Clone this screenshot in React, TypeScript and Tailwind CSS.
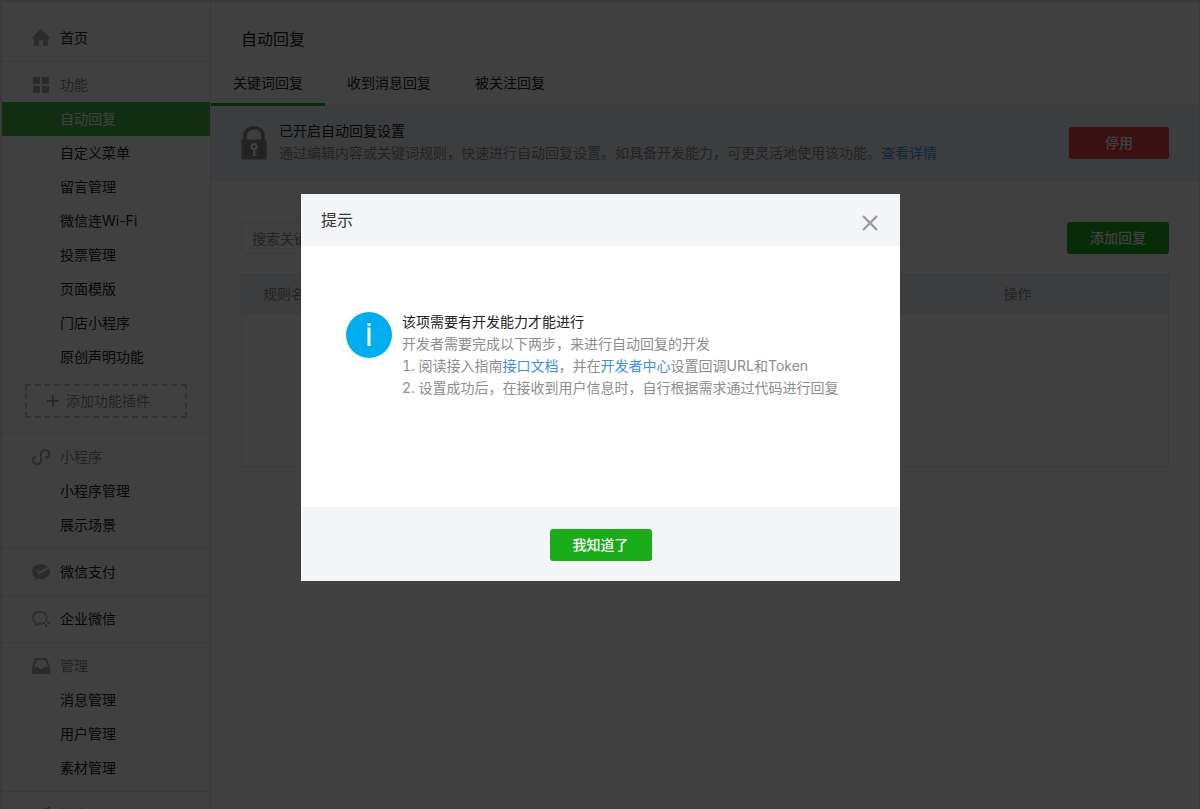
import { useState } from "react";
import type { ReactNode } from "react";
import clsx from "clsx";

type NavGroup = {
    title: string;
    icon: ReactNode;
    muted?: boolean;
    items?: string[];
    addPlugin?: boolean;
};

const HomeIcon = () => (
    <svg viewBox="0 0 18 18" className="size-[18px]" fill="currentColor" aria-hidden="true">
        <path d="M9 0 0 8.800V9.500h1.800V17h5v-5c0-.3.200-.5.500-.5h3.400c.3 0 .5.200.5.500v5h5V9.500H18V8.800z" />
    </svg>
);

const GridIcon = () => (
    <svg viewBox="0 0 18 18" className="size-[18px]" fill="currentColor" aria-hidden="true">
        <path d="M1 1h7v7H1zM10 1h7v7h-7zM1 10h7v7H1zM10 10h7v7h-7z" />
    </svg>
);

const MiniProgramIcon = () => (
    <svg viewBox="0 0 18 18" className="size-[18px]" fill="none" stroke="currentColor" strokeWidth="2" strokeLinecap="round" aria-hidden="true">
        <path d="M14 9.6c1.700-.3 3-1.700 3-3.700C17 3.500 15.300 2 13 2S9 3.600 9 5.800v6.400C9 14.400 7.300 16 5 16s-4-1.500-4-3.900c0-2 1.300-3.400 3-3.700" />
    </svg>
);

const PayIcon = () => (
    <svg viewBox="0 0 18 18" className="size-[18px]" fill="currentColor" aria-hidden="true">
        <path d="M17.200 5.400 7.500 11.300c-.3.200-.6.100-.8-.2L4.400 7c-.2-.4.1-.6.4-.4l2.300 1.600c.3.200.6.200.9.100l7.700-4.500C14.100 2.100 11.700 1 9 1 4 1 0 4.400 0 8.600c0 2.400 1.300 4.500 3.300 5.900l-.4 2.100c-.1.400.2.600.5.400l2.400-1.200c1 .3 2 .4 3.200.4 5 0 9-3.400 9-7.600 0-1.100-.3-2.200-.8-3.200z" />
    </svg>
);

const WorkIcon = () => (
    <svg viewBox="0 0 18 18" className="size-[18px]" fill="none" stroke="currentColor" strokeWidth="1.500" aria-hidden="true">
        <path d="M10.500 13.800c-1.100.3-2.600.4-4 .1L3.300 15.300l.2-2.600C1.800 11.500.8 9.700.8 7.800.8 4.300 3.900 1.700 7.800 1.700s7 2.600 7 6.100c0 .6-.1 1.100-.3 1.600" />
        <path d="M14.200 9.600v2.400M14.200 14.600v2.400M10.700 13.300h2.300M15.500 13.300h2.400" strokeWidth="2" />
    </svg>
);

const InboxIcon = () => (
    <svg viewBox="0 0 18 18" className="size-[18px]" fill="currentColor" aria-hidden="true">
        <path fillRule="evenodd" d="M3.500 1h11L18 9.500V17H0V9.500zM5 2.800 2.200 9.700H6c.2 1.300 1.400 2.300 3 2.300s2.800-1 3-2.300h3.800L13 2.800z" />
    </svg>
);

const SendIcon = () => (
    <svg viewBox="0 0 18 18" className="size-[18px]" fill="currentColor" aria-hidden="true">
        <path d="M18 0v17l-7-3-3 4v-5L15 4 5 12l-5-2z" />
    </svg>
);

const LockIcon = () => (
    <svg viewBox="0 0 26 34" className="h-[34px] w-[26px] shrink-0 text-[#8d8d8d]" fill="none" aria-hidden="true">
        <path d="M4 14V9.500C4 5 8 1.800 13 1.800S22 5 22 9.500V14" stroke="currentColor" strokeWidth="3.600" />
        <path d="M0.500 13.500h25v20h-25z" fill="currentColor" />
        <circle cx="13" cy="20.500" r="2.500" stroke="#fff" strokeWidth="2" />
        <path d="M13 23v7M13 26h2.500M13 29h2.500" stroke="#fff" strokeWidth="1.600" />
    </svg>
);

const groups: NavGroup[] = [
    { title: "首页", icon: <HomeIcon /> },
    {
        title: "功能",
        icon: <GridIcon />,
        muted: true,
        items: ["自动回复", "自定义菜单", "留言管理", "微信连Wi-Fi", "投票管理", "页面模版", "门店小程序", "原创声明功能"],
        addPlugin: true,
    },
    { title: "小程序", icon: <MiniProgramIcon />, muted: true, items: ["小程序管理", "展示场景"] },
    { title: "微信支付", icon: <PayIcon /> },
    { title: "企业微信", icon: <WorkIcon /> },
    { title: "管理", icon: <InboxIcon />, muted: true, items: ["消息管理", "用户管理", "素材管理"] },
    { title: "推广", icon: <SendIcon />, muted: true },
];

const tabs = ["关键词回复", "收到消息回复", "被关注回复"];

function Sidebar() {
    return (
        <nav className="w-[209px] shrink-0 border-r border-[#e7e7eb] pt-[13px]">
            {groups.map((group, i) => (
                <section key={group.title} className={clsx("pt-1.5 pb-1.5", i > 0 && "border-t border-[#e7e7eb]")}>
                    <div className="flex h-[34px] items-center pl-[30px] text-[#acacac]">
                        {group.icon}
                        {group.muted ? (
                            <h2 className="ml-2.5 text-[#8d8d8d]">{group.title}</h2>
                        ) : (
                            <a href="#" className="ml-2.5 text-[#222222]">{group.title}</a>
                        )}
                    </div>
                    {group.items && (
                        <ul>
                            {group.items.map((item) => (
                                <li key={item}>
                                    <a
                                        href="#"
                                        className={clsx(
                                            "block h-[34px] pl-[58px] leading-[34px]",
                                            item === "自动回复" ? "bg-[#44b549] text-white" : "text-[#222222]"
                                        )}
                                    >
                                        {item}
                                    </a>
                                </li>
                            ))}
                        </ul>
                    )}
                    {group.addPlugin && (
                        <button
                            type="button"
                            className="mt-2.5 mr-[22px] mb-[9px] ml-[23px] flex h-[34px] w-[162px] items-center border-2 border-dashed border-[#c4c4c4] pl-5 text-[#8d8d8d]"
                        >
                            <svg viewBox="0 0 12 12" className="mr-[7px] size-3" stroke="currentColor" strokeWidth="1.500" aria-hidden="true">
                                <path d="M6 0v12M0 6h12" />
                            </svg>
                            添加功能插件
                        </button>
                    )}
                </section>
            ))}
        </nav>
    );
}

function Content() {
    return (
        <main className="min-w-0 flex-1">
            <header className="border-b border-[#e7e7eb]">
                <h1 className="pt-[25px] pl-[30px] text-base leading-6 text-[#222222]">自动回复</h1>
                <div className="mt-[11px] -mb-px flex" role="tablist">
                    {tabs.map((tab, i) => (
                        <button
                            key={tab}
                            type="button"
                            role="tab"
                            aria-selected={i === 0}
                            className={clsx(
                                "h-11 border-b-3 px-[22px] text-[#222222]",
                                i === 0 ? "border-[#1aad19]" : "border-transparent"
                            )}
                        >
                            {tab}
                        </button>
                    ))}
                </div>
            </header>
            <section className="flex items-start border-b border-[#e7e7eb] bg-[#eef1f6] pt-[14px] pr-[30px] pb-4 pl-[30px]">
                <div className="pt-1.5">
                    <LockIcon />
                </div>
                <div className="ml-3 flex-1 leading-[22px]">
                    <h2 className="text-[#222222]">已开启自动回复设置</h2>
                    <p className="text-[#8d8d8d]">
                        通过编辑内容或关键词规则，快速进行自动回复设置。如具备开发能力，可更灵活地使用该功能。
                        <a href="#" className="text-[#459ae9]">查看详情</a>
                    </p>
                </div>
                <button type="button" className="mt-[7px] h-8 w-[100px] rounded-[3px] bg-[#e64340] font-medium text-white">
                    停用
                </button>
            </section>
            <div className="px-[30px] pt-[41px]">
                <div className="flex items-start justify-between">
                    <input
                        type="search"
                        aria-label="搜索关键词"
                        placeholder="搜索关键词/规则名称"
                        className="h-8 w-[280px] rounded-[3px] border border-[#e7e7eb] px-2.5 placeholder:text-[#8d8d8d]"
                    />
                    <button type="button" className="h-8 w-[102px] rounded-[3px] bg-[#1aad19] font-medium text-white">
                        添加回复
                    </button>
                </div>
                <table className="mt-5 w-full border border-[#e7e7eb] text-left">
                    <thead>
                        <tr className="h-[39px] border-b border-[#e7e7eb] bg-[#eef1f6] text-[#8d8d8d]">
                            <th className="pl-[21px] font-normal">规则名称</th>
                            <th className="w-[187px] pl-[22px] font-normal">操作</th>
                        </tr>
                    </thead>
                    <tbody>
                        <tr className="h-[153px]">
                            <td colSpan={2} />
                        </tr>
                    </tbody>
                </table>
            </div>
        </main>
    );
}

function TipDialog({ onClose }: { onClose: () => void }) {
    return (
        <div className="fixed inset-0 flex items-start justify-center bg-black/75 pt-[194px] pl-px">
            <div role="dialog" aria-modal="true" aria-labelledby="tip-title" className="w-[599px] max-w-full bg-white">
                <header className="flex h-[52px] items-center justify-between bg-[#f4f5f9] pr-[22px] pl-5">
                    <h2 id="tip-title" className="text-base text-[#353535]">提示</h2>
                    <button type="button" aria-label="关闭" onClick={onClose} className="mt-1.5 text-[#9b9b9b]">
                        <svg viewBox="0 0 16 16" className="size-4" stroke="currentColor" strokeWidth="2.400">
                            <path d="M1 1l14 14M15 1 1 15" />
                        </svg>
                    </button>
                </header>
                <div className="flex min-h-[261px] items-start pt-[65px] pr-10 pl-[45px]">
                    <svg viewBox="0 0 46 46" className="mt-px size-[46px] shrink-0" aria-hidden="true">
                        <circle cx="23" cy="23" r="23" fill="#00aeef" />
                        <path d="M21.500 15.500h3V34h-3zM21.500 11h3v2.800h-3z" fill="#fff" />
                    </svg>
                    <div className="ml-2.5 leading-[22px] text-[#8d8d8d] tabular-nums">
                        <h3 className="text-[#222222]">该项需要有开发能力才能进行</h3>
                        <p>开发者需要完成以下两步，来进行自动回复的开发</p>
                        <p>
                            1. 阅读接入指南<a href="#" className="text-[#3c8cf0]">接口文档</a>，并在
                            <a href="#" className="text-[#3c8cf0]">开发者中心</a>设置回调URL和Token
                        </p>
                        <p>2. 设置成功后，在接收到用户信息时，自行根据需求通过代码进行回复</p>
                    </div>
                </div>
                <footer className="flex h-[74px] items-center justify-center bg-[#f4f5f9]">
                    <button type="button" onClick={onClose} className="mt-0.5 h-8 w-[102px] rounded-[3px] bg-[#1aad19] font-medium text-white">
                        我知道了
                    </button>
                </footer>
            </div>
        </div>
    );
}

export default function App() {
    const [open, setOpen] = useState(true);

    return (
        <div className="h-screen overflow-hidden border-t-2 border-r border-l-2 border-[#e7e7eb] bg-white font-['Inter','Noto_Sans_CJK_SC',sans-serif] text-sm">
            <div className="flex min-h-full">
                <Sidebar />
                <Content />
            </div>
            {open && <TipDialog onClose={() => setOpen(false)} />}
        </div>
    );
}
